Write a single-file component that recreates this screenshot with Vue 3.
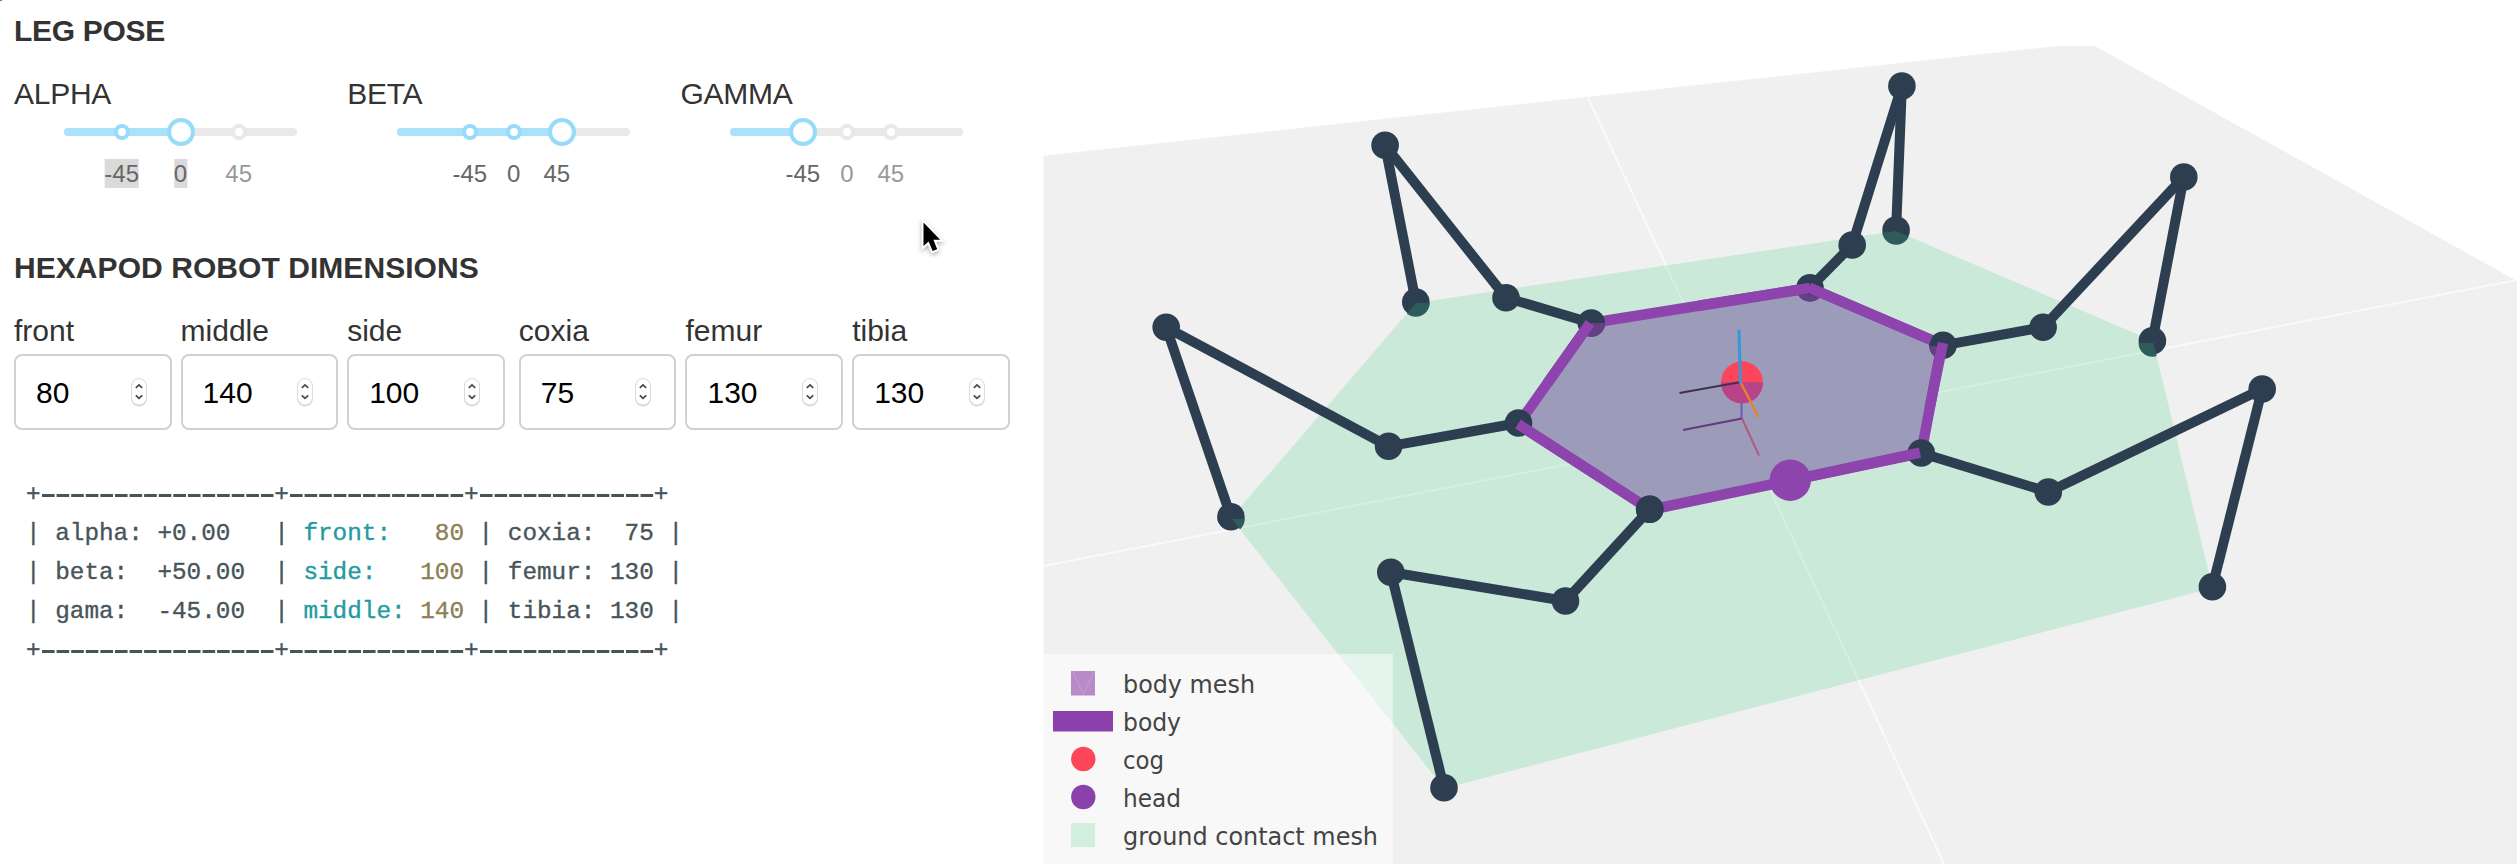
<script setup>
const sliders = [
  { name: 'ALPHA', value: 116.5, marks: [{ at: 57.7, text: '-45', picked: true }, { at: 116.5, text: '0', picked: true }, { at: 174.7, text: '45' }] },
  { name: 'BETA', value: 164.6, marks: [{ at: 72.6, text: '-45' }, { at: 116.6, text: '0' }, { at: 159.6, text: '45' }] },
  { name: 'GAMMA', value: 72.5, marks: [{ at: 72.5, text: '-45' }, { at: 116.6, text: '0' }, { at: 160.5, text: '45' }] },
]

const bodyDims = [{ name: 'front', value: 80 }, { name: 'middle', value: 140 }, { name: 'side', value: 100 }]
const legDims = [{ name: 'coxia', value: 75 }, { name: 'femur', value: 130 }, { name: 'tibia', value: 130 }]
const groups = [bodyDims, legDims]

const rule = [16, 12, 12].map((n) => '-'.repeat(n))
const rows = [
  { a: '| alpha: +0.00   | ', key: 'front:', val: '   80', b: ' | coxia:  75 |' },
  { a: '| beta:  +50.00  | ', key: 'side:', val: '   100', b: ' | femur: 130 |' },
  { a: '| gama:  -45.00  | ', key: 'middle:', val: ' 140', b: ' | tibia: 130 |' },
]

// each leg: body joint, coxia joint, femur joint, foot tip
const legs = [
  [[1518.5, 423], [1388.6, 446.3], [1166.2, 327.3], [1230.9, 516.7]],
  [[1591.3, 323], [1506, 297.7], [1385.1, 145.3], [1415.8, 302]],
  [[1810, 287.7], [1852.2, 245], [1901.9, 86], [1896.1, 230]],
  [[1943, 345.3], [2043.1, 327.3], [2183.8, 177], [2152.4, 340.7]],
  [[1921.3, 453], [2048.3, 492], [2262.2, 389], [2212.4, 586.7]],
  [[1649.7, 509.3], [1565.5, 601], [1390.8, 572.3], [1444, 787.7]],
]
const segments = legs.flatMap((leg) => leg.slice(1).map((p, i) => [leg[i], p]))
const joints = legs.flat()
const bodyPoints = '1517,424 1588,323 1810,288 1942,344 1921,454 1650,511'
const groundPoints = '1231,518 1416,303 1896,231 2153,341 2212.5,588 1444,788.5'

const legend = [
  { text: 'body mesh', y: 692.5, w: 132 },
  { text: 'body', y: 730.5, w: 58 },
  { text: 'cog', y: 768.5, w: 41 },
  { text: 'head', y: 806.5, w: 58 },
  { text: 'ground contact mesh', y: 844.5, w: 255 },
]
</script>

<template>
  <main class="page">
    <span class="corner"></span>
    <section class="panel">
      <h2 class="first">LEG POSE</h2>
      <div class="sliders">
        <div v-for="s in sliders" :key="s.name" class="slider">
          <label class="caps">{{ s.name }}</label>
          <div class="track">
            <div class="fill" :style="{ width: s.value + 'px' }"></div>
            <template v-for="m in s.marks" :key="m.text">
              <i class="dot" :class="{ on: m.at <= s.value }" :style="{ left: m.at + 'px' }"></i>
              <span class="mark" :class="{ on: m.at <= s.value, picked: m.picked }" :style="{ left: m.at + 'px' }">{{ m.text }}</span>
            </template>
            <i class="handle" :style="{ left: s.value + 'px' }"></i>
          </div>
        </div>
      </div>
      <h2 class="second">HEXAPOD ROBOT DIMENSIONS</h2>
      <div class="dims">
        <div v-for="(g, gi) in groups" :key="gi" class="group">
          <div v-for="d in g" :key="d.name" class="dim">
            <label>{{ d.name }}</label>
            <div class="field">
              <span>{{ d.value }}</span>
              <svg class="spin" width="20" height="32" viewBox="0 0 20 32">
                <rect x="2" y="3" width="16" height="27.5" rx="8" fill="#bbb" opacity=".5" />
                <rect x="2.5" y="2.5" width="15" height="26.5" rx="7.5" fill="#fff" stroke="#dcdcdc" />
                <path d="M6.8 11.8 10 8.9 13.2 11.8M6.8 19.4 10 22.3 13.2 19.4" fill="none" stroke="#4a4a4a" stroke-width="1.8" />
              </svg>
            </div>
          </div>
        </div>
      </div>
      <div class="table">
        <div class="line">+<template v-for="(r, i) in rule" :key="i"><span class="dash">{{ r }}</span>+</template></div>
        <div v-for="r in rows" :key="r.key" class="line">{{ r.a }}<span class="key">{{ r.key }}</span><span class="val">{{ r.val }}</span>{{ r.b }}</div>
        <div class="line">+<template v-for="(r, i) in rule" :key="i"><span class="dash">{{ r }}</span>+</template></div>
      </div>
    </section>

    <svg class="scene" width="1477" height="868" viewBox="1043 0 1477 868">
      <defs>
        <clipPath id="bodyClip"><polygon :points="bodyPoints" /></clipPath>
        <clipPath id="groundClip"><polygon :points="groundPoints" /></clipPath>
      </defs>
      <polygon points="1043.5,155.7 2058,46 2095,46 2517,281 2517,864 1043.5,864" fill="#f0f0f0" />
      <path d="M1587.6 97 1944 864M1043.5 566 2517 280" stroke="#fff" stroke-width="2" opacity=".65" fill="none" />
      <polygon :points="groundPoints" fill="#36ce7b" fill-opacity=".2" />
      <polygon :points="bodyPoints" fill="#9a97b8" fill-opacity=".96" />

      <g stroke="#8e44ad" stroke-width="10.5">
        <path d="M1518.5 424 1590 323M1588 323.5 1810 288M1810 288 1943 345M1942 343 1921.3 453M1921 453 1649.7 510M1649.7 509.5 1518 424" fill="none" />
      </g>
      <g stroke="#2c3e50" stroke-width="10">
        <line v-for="([p, q], i) in segments" :key="i" :x1="p[0]" :y1="p[1]" :x2="q[0]" :y2="q[1]" />
      </g>
      <circle v-for="(p, i) in joints" :key="i" :cx="p[0]" :cy="p[1]" r="13.8" fill="#2c3e50" />

      <path d="M1591.3 323h13.8a13.8 13.8 0 0 1-20.5 12z" fill="#643f86" />
      <path d="M1798 294.5h24a13.8 13.8 0 0 1-24 0z" fill="#643f86" />
      <path d="M1929.2 346h13.8v8l-7 3.4a13.8 13.8 0 0 1-6.8-11.4z" fill="#643f86" />
      <g fill="#2d5c5b" clip-path="url(#groundClip)">
        <path d="M1217.1 519h27.6a13.8 13.8 0 0 1-27.6 0z" />
        <path d="M1402 303h27.6a13.8 13.8 0 0 1-27.6 0z" />
        <path d="M1882.3 231h27.6a13.8 13.8 0 0 1-27.6 0z" />
        <path d="M2138.6 343h27.6a13.8 13.8 0 0 1-27.6 0z" />
      </g>
      <path d="M1590 323 1547.5 383M1699 305.8 1810 288M1809 287.5 1931 339.8M1943 343 1929.6 408M1920 452.7 1800 478.4M1518 424 1600 477.2" stroke="#8e44ad" stroke-width="10.5" fill="none" />
      <circle cx="1649.7" cy="509.3" r="13.8" fill="#2c3e50" />
      <circle cx="1790.3" cy="480.2" r="20.7" fill="#8e44ad" />

      <circle cx="1742" cy="382.3" r="21" fill="#fd4659" />
      <path d="M1721 382.3h42a21 21 0 0 1-42 0z" fill="#b94389" />
      <g fill="none" stroke-width="2">
        <path d="M1679.5 393 1741 382" stroke="#41304f" />
        <path d="M1741.5 403V419" stroke="#5f5fc4" />
        <path d="M1683 430 1742 418.5" stroke="#633a7b" />
        <path d="M1742 418.5 1759 455.5" stroke="#b2597e" />
        <path d="M1741 383 1758.5 417.5" stroke="#e5842f" stroke-width="2.3" />
        <path d="M1739 329.5 1740.3 383" stroke="#3498db" stroke-width="3" />
      </g>

      <rect x="1043.5" y="654" width="349.3" height="210" fill="#fff" fill-opacity=".5" />
      <rect x="1071" y="671" width="24" height="24.5" fill="#b88bc8" />
      <path d="M1073 671.5 1083.5 694.5 1094 671.5" fill="none" stroke="#c59ed2" stroke-width="1" />
      <rect x="1053" y="711" width="60" height="20.5" fill="#8b41ab" />
      <circle cx="1083.3" cy="759" r="12.2" fill="#fd4659" />
      <circle cx="1083.3" cy="797" r="12.2" fill="#8b41ab" />
      <rect x="1071" y="823" width="24" height="24" fill="#d2efde" />
      <text v-for="l in legend" :key="l.text" x="1123" :y="l.y" :textLength="l.w" lengthAdjust="spacingAndGlyphs" class="legend">{{ l.text }}</text>
    </svg>

    <svg class="cursor" width="32" height="40" viewBox="0 0 32 40">
      <path d="M5.5 4.5V28L10.6 23.4 14.6 33 19.2 31.2 15.4 21.8H22.2Z" fill="#000" stroke="#fff" stroke-width="4" paint-order="stroke" />
    </svg>
  </main>
</template>

<style>
body { background: #fff; overflow: hidden; }
</style>

<style scoped>
.page {
  position: relative;
  display: flex;
  width: 2520px;
  height: 868px;
  overflow: hidden;
  background: #fff;
  color: #333;
  font-family: "Liberation Sans", Arial, sans-serif;
  font-size: 30px;
  line-height: 34px;
}
.corner { position: absolute; left: 0; top: 0; width: 2px; height: 1px; background: #777; }
.panel { width: 1043px; flex: none; box-sizing: border-box; padding: 14px 0 0 14px; }
h2 { margin: 0; font-size: 30px; line-height: 34px; font-weight: 700; }
.first { letter-spacing: -0.3px; }
.sliders { display: flex; margin-top: 29px; height: 144px; }
.slider { width: 333.2px; }
label { display: block; height: 34px; white-space: nowrap; }
.caps { letter-spacing: -0.25px; }
.track { position: relative; width: 233px; height: 8px; margin: 17px 0 0 50px; border-radius: 4px; background: #e9e9e9; }
.fill { height: 8px; border-radius: 4px 0 0 4px; background: #abe2fb; }
.dot, .handle { position: absolute; top: 4px; box-sizing: border-box; border-radius: 50%; background: #fff; transform: translate(-50%, -50%); }
.dot { width: 16px; height: 16px; border: 4px solid #e9e9e9; }
.dot.on { border-color: #96dbfa; }
.handle { width: 28px; height: 28px; border: 4px solid #96dbfa; }
.mark { position: absolute; top: 31px; transform: translateX(-50%); font-size: 24px; line-height: 29px; color: #999; white-space: nowrap; }
.mark.on { color: #666; }
.mark.picked { background: #dadada; }
.second { margin-top: 30px; letter-spacing: 0.06px; }
.dims { display: flex; gap: 14px; margin-top: 29px; }
.group { display: flex; gap: 9px; }
.dim { width: 157.6px; }
.group:last-child .dim { width: 157.7px; }
.field { display: flex; align-items: center; justify-content: space-between; box-sizing: border-box; height: 76px; margin-top: 6px; padding: 1px 21px 0 20px; border: 2px solid #d1d1d1; border-radius: 8px; color: #000; }
.spin { flex: none; margin-bottom: 1px; }
.table { margin-top: 45px; padding-left: 12px; font-family: "Liberation Mono", "Courier New", monospace; font-size: 24.33px; line-height: 39px; color: #47555a; -webkit-text-stroke: 0.35px currentColor; }
.line { height: 39px; white-space: pre; }
/* widens each hyphen into a long rule segment, one per 14.6px character cell */
.dash {
  display: inline-block;
  height: 39px;
  vertical-align: top;
  background: linear-gradient(90deg, transparent 1.2px, #47555a 1.2px, #47555a 13.4px, transparent 13.4px) 0 18.5px / 14.6px 2.5px repeat-x;
}
.key { color: #1f9ba0; }
.val { color: #8d7f55; }
.scene { flex: none; display: block; }
.legend { font-family: "DejaVu Sans", Verdana, sans-serif; font-size: 24px; fill: #444; }
.cursor { position: absolute; left: 918px; top: 218px; filter: drop-shadow(0 2px 2px rgba(0, 0, 0, .3)); }
</style>
